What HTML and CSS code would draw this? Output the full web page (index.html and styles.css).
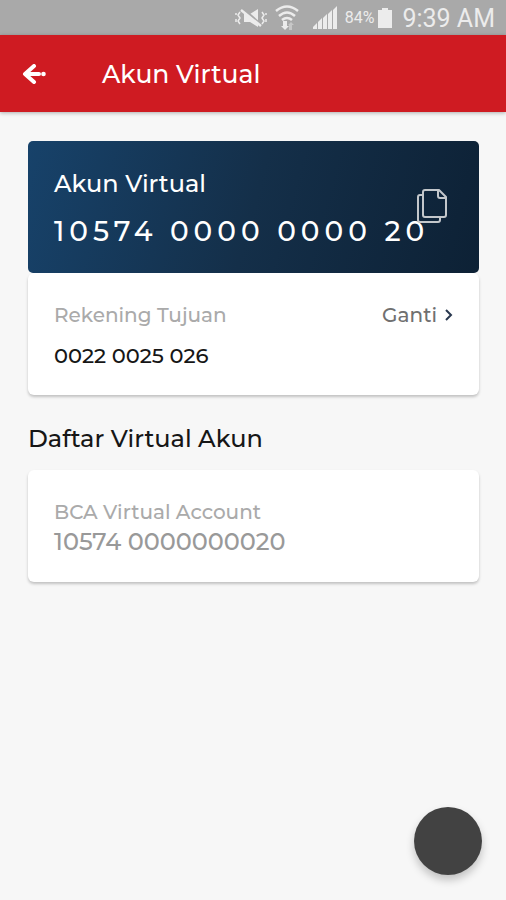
FILE: index.html
```html
<!DOCTYPE html>
<html lang="id">
<head>
<meta charset="utf-8">
<meta name="viewport" content="width=device-width, initial-scale=1">
<title>Akun Virtual</title>
<link rel="stylesheet" href="styles.css">
</head>
<body>
<div class="status">
  <svg class="status-mute" viewBox="0 0 32 20" aria-hidden="true">
    <path d="M9 6h6l8-5v18l-8-5H9z" fill="currentColor"/>
    <path d="M8 1l19 17" stroke="#a9a9a9" stroke-width="3"/>
    <path d="M6 2l20 16" stroke="currentColor" stroke-width="2.500"/>
    <path d="M5 4l-2 3 2 3-2 3 2 3M1 5v2M1 11v3M27 4l2 3-2 3 2 3-2 3M31 5v2M31 11v3" fill="none" stroke="currentColor" stroke-width="1.500"/>
  </svg>
  <svg class="status-wifi" viewBox="0 0 24 26" aria-hidden="true">
    <path d="M1 6q11-9 22 0M4 11q8-7 16 0M7 15q5-4 10 0" fill="none" stroke="currentColor" stroke-width="2.500"/>
    <path d="M8 16h4v5h2l-4 4-4-4h2z" fill="currentColor"/>
    <path d="M14 25v-5h-1l3-3 3 3h-2v5z" fill="currentColor" opacity=".45"/>
  </svg>
  <svg class="status-signal" viewBox="0 0 24 23" aria-hidden="true">
    <path d="M0 23v-2l4-4v6zM5 23v-7l4-4v11zM10 23V12l4-4v15zM15 23V8l4-4v19zM20 23V4l4-4v23z" fill="currentColor"/>
  </svg>
  <span class="status-percent">84%</span>
  <svg class="status-battery" viewBox="0 0 14 20" aria-hidden="true">
    <path d="M0 2h4V0h6v2h4v18H0z" fill="currentColor"/>
  </svg>
  <span class="status-time">9:39 AM</span>
</div>
<header class="bar">
  <button class="back" type="button" aria-label="Kembali">
    <svg viewBox="0 0 24 20" aria-hidden="true">
      <path d="M12 2L3 10l9 8M4 10h13" fill="none" stroke="currentColor" stroke-width="4" stroke-linejoin="round" stroke-linecap="round"/>
      <circle cx="21.500" cy="10" r="2.300" fill="currentColor"/>
    </svg>
  </button>
  <h1 class="bar-title">Akun Virtual</h1>
</header>
<main class="content">
  <section class="account">
    <div class="hero">
      <h2 class="hero-title">Akun Virtual</h2>
      <p class="hero-number">10574 0000 0000 20</p>
      <button class="copy" type="button" aria-label="Salin nomor">
        <svg viewBox="0 0 32 36" aria-hidden="true">
          <path d="M7 7H4q-2 0-2 2v23q0 2 2 2h18q2 0 2-2v-3" fill="none" stroke="currentColor" stroke-width="2"/>
          <path d="M9 2h14l7 7v18q0 2-2 2H9q-2 0-2-2V4q0-2 2-2zM22 2v6q0 2 2 2h6" fill="none" stroke="currentColor" stroke-width="2" stroke-linejoin="round"/>
        </svg>
      </button>
    </div>
    <div class="panel target">
      <div class="row">
        <span class="label">Rekening Tujuan</span>
        <a class="change" href="#ganti">Ganti
          <svg viewBox="0 0 8 12" aria-hidden="true"><path d="M1 1l5 5-5 5" fill="none" stroke="#29384f" stroke-width="2"/></svg>
        </a>
      </div>
      <p class="target-number">0022 0025 026</p>
    </div>
  </section>
  <h2 class="heading">Daftar Virtual Akun</h2>
  <section class="panel bank">
    <p class="label">BCA Virtual Account</p>
    <p class="bank-number">10574 0000000020</p>
  </section>
</main>
<button class="fab" type="button" aria-label="Menu"></button>
</body>
</html>
```
FILE: styles.css
```css
* { box-sizing: border-box; }
body {
  margin: 0;
  min-height: 100vh;
  background: #f7f7f7;
  color: #161616;
  font-family: Montserrat, Inter, "Liberation Sans", sans-serif;
  font-weight: 500;
}
h1, h2, p { margin: 0; font-weight: 500; }
button { padding: 0; border: 0; background: none; color: inherit; font: inherit; }
svg { display: block; }

.status {
  display: flex;
  align-items: center;
  justify-content: flex-end;
  height: 35px;
  padding-right: 11px;
  background: #a9a9a9;
  color: #ececec;
  font-family: Roboto, sans-serif;
  font-weight: 400;
}
.status-mute { width: 32px; height: 20px; margin-right: 8px; }
.status-wifi { width: 24px; height: 26px; margin-right: 14px; }
.status-signal { width: 24px; height: 23px; margin-right: 8px; }
.status-percent { margin-right: 4px; font-size: 16px; }
.status-battery { width: 14px; height: 20px; margin-right: 10px; }
.status-time { padding-top: 2px; font-size: 25px; line-height: 32px; }

.bar {
  display: flex;
  align-items: center;
  gap: 56px;
  height: 77px;
  padding: 0 22px;
  background: #cf1b22;
  color: #fff;
  box-shadow: 0 1px 4px rgba(0, 0, 0, .3);
}
.back svg { width: 24px; height: 20px; }
.bar-title { font-size: 25px; line-height: 32px; }

.content { padding: 29px 27px 28px 28px; }
.hero {
  position: relative;
  padding: 27px 26px 24px;
  border-radius: 5px;
  background: linear-gradient(105deg, #17426a, #142f49 50%, #0d2135);
  color: #fff;
}
.hero-title { font-size: 24px; line-height: 32px; }
.hero-number {
  padding-top: 13px;
  font-size: 28px;
  line-height: 36px;
  letter-spacing: 5px;
  white-space: nowrap;
}
.copy { position: absolute; top: 47px; right: 31px; color: #c3c7cb; }
.copy svg { width: 32px; height: 36px; }

.panel {
  padding: 26px;
  border-radius: 6px;
  background: #fff;
  box-shadow: 0 2px 3px rgba(0, 0, 0, .22);
}
.target { padding-bottom: 23px; }
.row { display: flex; align-items: center; justify-content: space-between; }
.label { color: #aaa; font-size: 20px; line-height: 32px; }
.change {
  display: flex;
  align-items: center;
  gap: 8px;
  color: #707070;
  font-size: 20px;
  line-height: 32px;
  text-decoration: none;
}
.change svg { width: 8px; height: 12px; }
.target-number { padding-top: 9px; font-size: 21px; line-height: 32px; }
.heading { padding: 28px 0 15px; font-size: 24px; line-height: 32px; }
.bank-number { color: #999; font-size: 24px; line-height: 28px; }

.fab {
  position: fixed;
  right: 24px;
  bottom: 25px;
  width: 68px;
  height: 68px;
  border-radius: 50%;
  background: #424242;
  box-shadow: 0 5px 9px rgba(0, 0, 0, .22);
}
```
